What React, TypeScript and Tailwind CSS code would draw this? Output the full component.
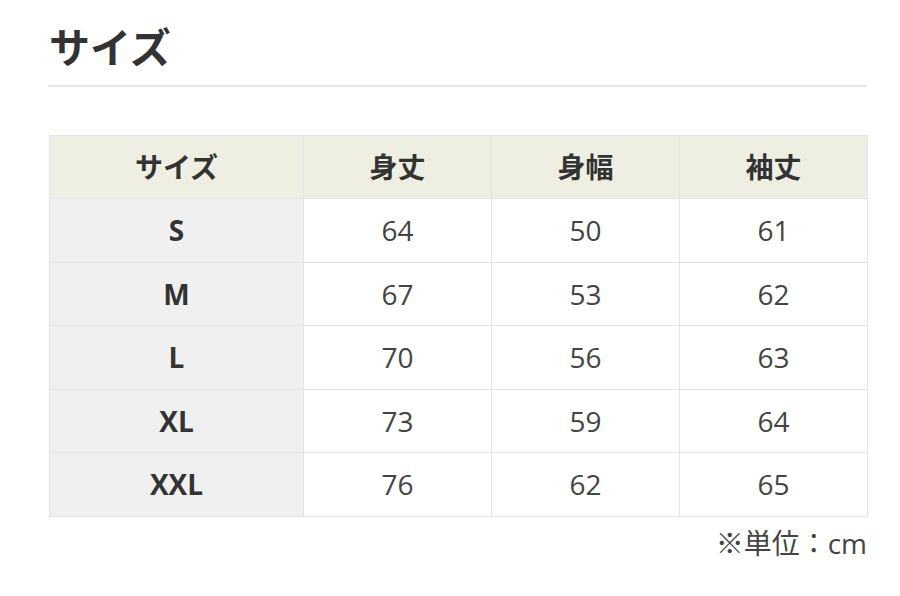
const rows = [
  { size: 'S', length: 64, width: 50, sleeve: 61 },
  { size: 'M', length: 67, width: 53, sleeve: 62 },
  { size: 'L', length: 70, width: 56, sleeve: 63 },
  { size: 'XL', length: 73, width: 59, sleeve: 64 },
  { size: 'XXL', length: 76, width: 62, sleeve: 65 },
]

const font = { fontFamily: '"Open Sans", "Noto Sans CJK JP", sans-serif' }

export default function App() {
  return (
    <div className="w-[900px] h-[596px] bg-white text-[#333]" style={font}>
      <div className="pl-[48px] pr-[34px] pt-[18px]">
        <h2 className="text-[41px] font-bold leading-[58px] pl-[1px] pb-[9px] border-b-2 border-[#e6e6e6]">
          サイズ
        </h2>
        <table className="mt-[48px] w-[818px] border-collapse table-fixed ml-[1px]">
          <colgroup>
            <col className="w-[254px]" />
            <col className="w-[188px]" />
            <col className="w-[188px]" />
            <col className="w-[188px]" />
          </colgroup>
          <thead>
            <tr className="h-[63px] bg-[#efeee2]">
              {['サイズ', '身丈', '身幅', '袖丈'].map((h) => (
                <th key={h} className="border border-[#e4e4e4] text-[28px] font-bold text-[#333]">
                  {h}
                </th>
              ))}
            </tr>
          </thead>
          <tbody>
            {rows.map((r) => (
              <tr key={r.size} className="h-[63.5px]">
                <th className="border border-[#e4e4e4] bg-[#f0f0f0] text-[28px] font-bold text-[#333]">
                  {r.size}
                </th>
                <td className="border border-[#e4e4e4] text-center text-[28px] text-[#444]">{r.length}</td>
                <td className="border border-[#e4e4e4] text-center text-[28px] text-[#444]">{r.width}</td>
                <td className="border border-[#e4e4e4] text-center text-[28px] text-[#444]">{r.sleeve}</td>
              </tr>
            ))}
          </tbody>
        </table>
        <p className="w-[819px] text-right text-[28px] text-[#444] leading-[40px] mt-[6px]">※単位：cm</p>
      </div>
    </div>
  )
}
